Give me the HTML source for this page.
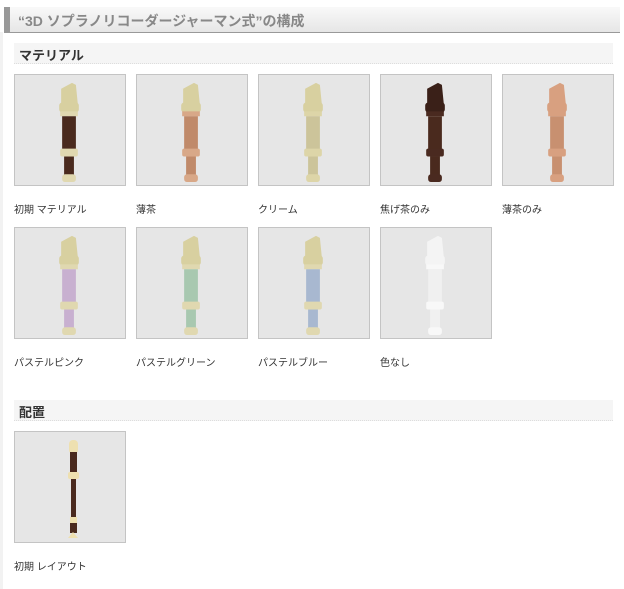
<!DOCTYPE html>
<html><head><meta charset="utf-8"><style>
body{margin:0;background:#fff;font-family:"Liberation Sans","Noto Sans CJK JP",sans-serif;width:624px;height:589px;position:relative;overflow:hidden}
.title{position:absolute;left:4px;top:7px;width:616px;height:25px;background:linear-gradient(#f9f9f9,#e6e6e6);border-bottom:1px solid #999;}
.title:before{content:"";position:absolute;left:0;top:0;width:6px;height:25px;background:#999}
.title span{position:absolute;left:14px;top:4px;font-size:14px;color:#888;font-weight:bold}
.sec{position:absolute;left:14px;width:599px;height:20px;background:#f5f5f5;border-bottom:1px dotted #ddd}
.sec span{position:absolute;left:5px;top:2px;font-size:13px;font-weight:bold;color:#333}
.th{position:absolute;width:110px;height:110px;background:#e6e6e6;border:1px solid #c4c4c4}
.th svg{display:block}
.lb{position:absolute;font-size:10px;color:#333}
.lp{position:absolute;left:0;top:32px;width:3px;height:557px;background:#f2f2f2}
</style></head><body>
<svg width="0" height="0" style="position:absolute"><defs>
<symbol id="r" viewBox="0 0 112 112">
<path d="M47 14 L58 8 L62 10 L64 30 L47 32 Z" fill="var(--h)"/>
<rect x="45" y="28" width="20" height="10" rx="3" fill="var(--h)"/>
<rect x="46" y="37" width="18" height="5" fill="var(--j)"/>
<rect x="48" y="42" width="14" height="34" fill="var(--b)"/>
<rect x="46" y="75" width="18" height="8" rx="2" fill="var(--j)"/>
<rect x="50" y="83" width="10" height="22" fill="var(--b)"/>
<rect x="48" y="101" width="14" height="8" rx="3" fill="var(--j)"/>
</symbol></defs></svg>
<div class="lp"></div>
<div class="title"><span>“3D ソプラノリコーダージャーマン式”の構成</span></div>
<div class="sec" style="top:43px"><span>マテリアル</span></div>

<div class="th" style="left:14px;top:74px"><svg width="110" height="110" style="--h:#d8d0a0;--j:#e0d8b0;--b:#4a2a1e"><use href="#r"/></svg></div>
<div class="th" style="left:136px;top:74px"><svg width="110" height="110" style="--h:#d8d0a0;--j:#d8a888;--b:#c08a6a"><use href="#r"/></svg></div>
<div class="th" style="left:258px;top:74px"><svg width="110" height="110" style="--h:#d8d0a0;--j:#ddd5a8;--b:#ccc49a"><use href="#r"/></svg></div>
<div class="th" style="left:380px;top:74px"><svg width="110" height="110" style="--h:#3a2018;--j:#4a2a20;--b:#4a2a1e"><use href="#r"/></svg></div>
<div class="th" style="left:502px;top:74px"><svg width="110" height="110" style="--h:#d8a080;--j:#d8a080;--b:#c89070"><use href="#r"/></svg></div>
<div class="lb" style="left:14px;top:201px">初期 マテリアル</div>
<div class="lb" style="left:136px;top:201px">薄茶</div>
<div class="lb" style="left:258px;top:201px">クリーム</div>
<div class="lb" style="left:380px;top:201px">焦げ茶のみ</div>
<div class="lb" style="left:502px;top:201px">薄茶のみ</div>

<div class="th" style="left:14px;top:227px"><svg width="110" height="110" style="--h:#d8d0a0;--j:#e0d8b0;--b:#c8b0d0"><use href="#r"/></svg></div>
<div class="th" style="left:136px;top:227px"><svg width="110" height="110" style="--h:#d8d0a0;--j:#e0d8b0;--b:#a8c8b0"><use href="#r"/></svg></div>
<div class="th" style="left:258px;top:227px"><svg width="110" height="110" style="--h:#d8d0a0;--j:#e0d8b0;--b:#a8b8d0"><use href="#r"/></svg></div>
<div class="th" style="left:380px;top:227px"><svg width="110" height="110" style="--h:#f4f4f4;--j:#f8f8f8;--b:#f0f0f0"><use href="#r"/></svg></div>
<div class="lb" style="left:14px;top:354px">パステルピンク</div>
<div class="lb" style="left:136px;top:354px">パステルグリーン</div>
<div class="lb" style="left:258px;top:354px">パステルブルー</div>
<div class="lb" style="left:380px;top:354px">色なし</div>

<div class="sec" style="top:400px"><span>配置</span></div>
<div class="th" style="left:14px;top:431px"><svg width="110" height="110">
<rect x="54" y="8" width="9" height="14" rx="4" fill="#eee0b0"/>
<rect x="55" y="20" width="7" height="20" fill="#4a2a1e"/>
<rect x="53" y="40" width="11" height="7" rx="2" fill="#eee0b0"/>
<rect x="56" y="47" width="5" height="40" fill="#4a2a1e"/>
<rect x="55" y="85" width="7" height="6" fill="#eee0b0"/>
<rect x="55" y="91" width="7" height="10" fill="#4a2a1e"/>
<path d="M53 106 L58 100 L63 106 Z" fill="#eee0b0"/>
</svg></div>
<div class="lb" style="left:14px;top:558px">初期 レイアウト</div>
</body></html>
